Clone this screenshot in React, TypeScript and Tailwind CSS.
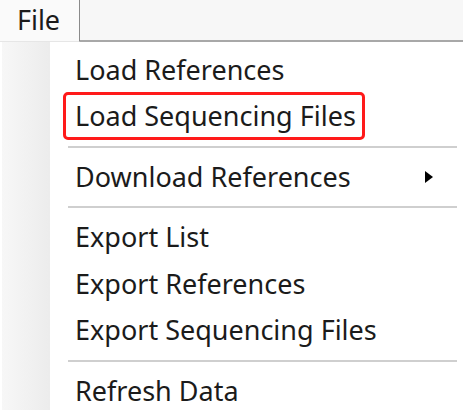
import React from 'react';

const font = { fontFamily: '"Noto Sans", "Open Sans", sans-serif' };

function Item({ label, submenu }: { label: string; submenu?: boolean }) {
  return (
    <div className="h-[46.5px] flex items-center pl-[25px] pr-[24px] text-[27px] text-[#1b1b1b]">
      <span className="flex-1">{label}</span>
      {submenu && (
        <svg width="8" height="12" viewBox="0 0 8 12">
          <path d="M0 0 L8 6 L0 12 Z" fill="#000" />
        </svg>
      )}
    </div>
  );
}

function Separator() {
  return (
    <div className="h-[14px] flex items-center pl-[18px]">
      <div className="h-[2px] w-full bg-[#cfcfcf]" />
    </div>
  );
}

export default function App() {
  return (
    <div className="w-[463px] h-[410px] overflow-hidden bg-white flex flex-col" style={font}>
      <div className="flex h-[42px] shrink-0">
        <div className="w-[80px] border-r border-[#8a8a8a] border-b border-b-[#e6e6e6] bg-[#fafafa] flex items-center justify-center text-[27px] text-[#1b1b1b] pr-[2px]">
          File
        </div>
        <div className="flex-1 bg-[#f7f7f7] border-b-2 border-[#a8a8a8]" />
      </div>
      <div className="flex flex-1">
        <div className="w-[50px] shrink-0 pl-[2px]">
          <div className="h-full bg-gradient-to-r from-[#f7f7f7] to-[#ececec]" />
        </div>
        <div className="flex-1 flex flex-col pt-[4.5px] pr-[6px]">
          <Item label="Load References" />
          <div className="h-[46.5px] flex items-center pl-[13px]">
            <span className="inline-flex items-center h-[48px] border-[3px] border-[#ff1a1a] rounded-[5px] pl-[9px] pr-[6px] text-[27px] text-[#1b1b1b]">
              Load Sequencing Files
            </span>
          </div>
          <Separator />
          <Item label="Download References" submenu />
          <Separator />
          <Item label="Export List" />
          <Item label="Export References" />
          <Item label="Export Sequencing Files" />
          <Separator />
          <Item label="Refresh Data" />
        </div>
      </div>
    </div>
  );
}
